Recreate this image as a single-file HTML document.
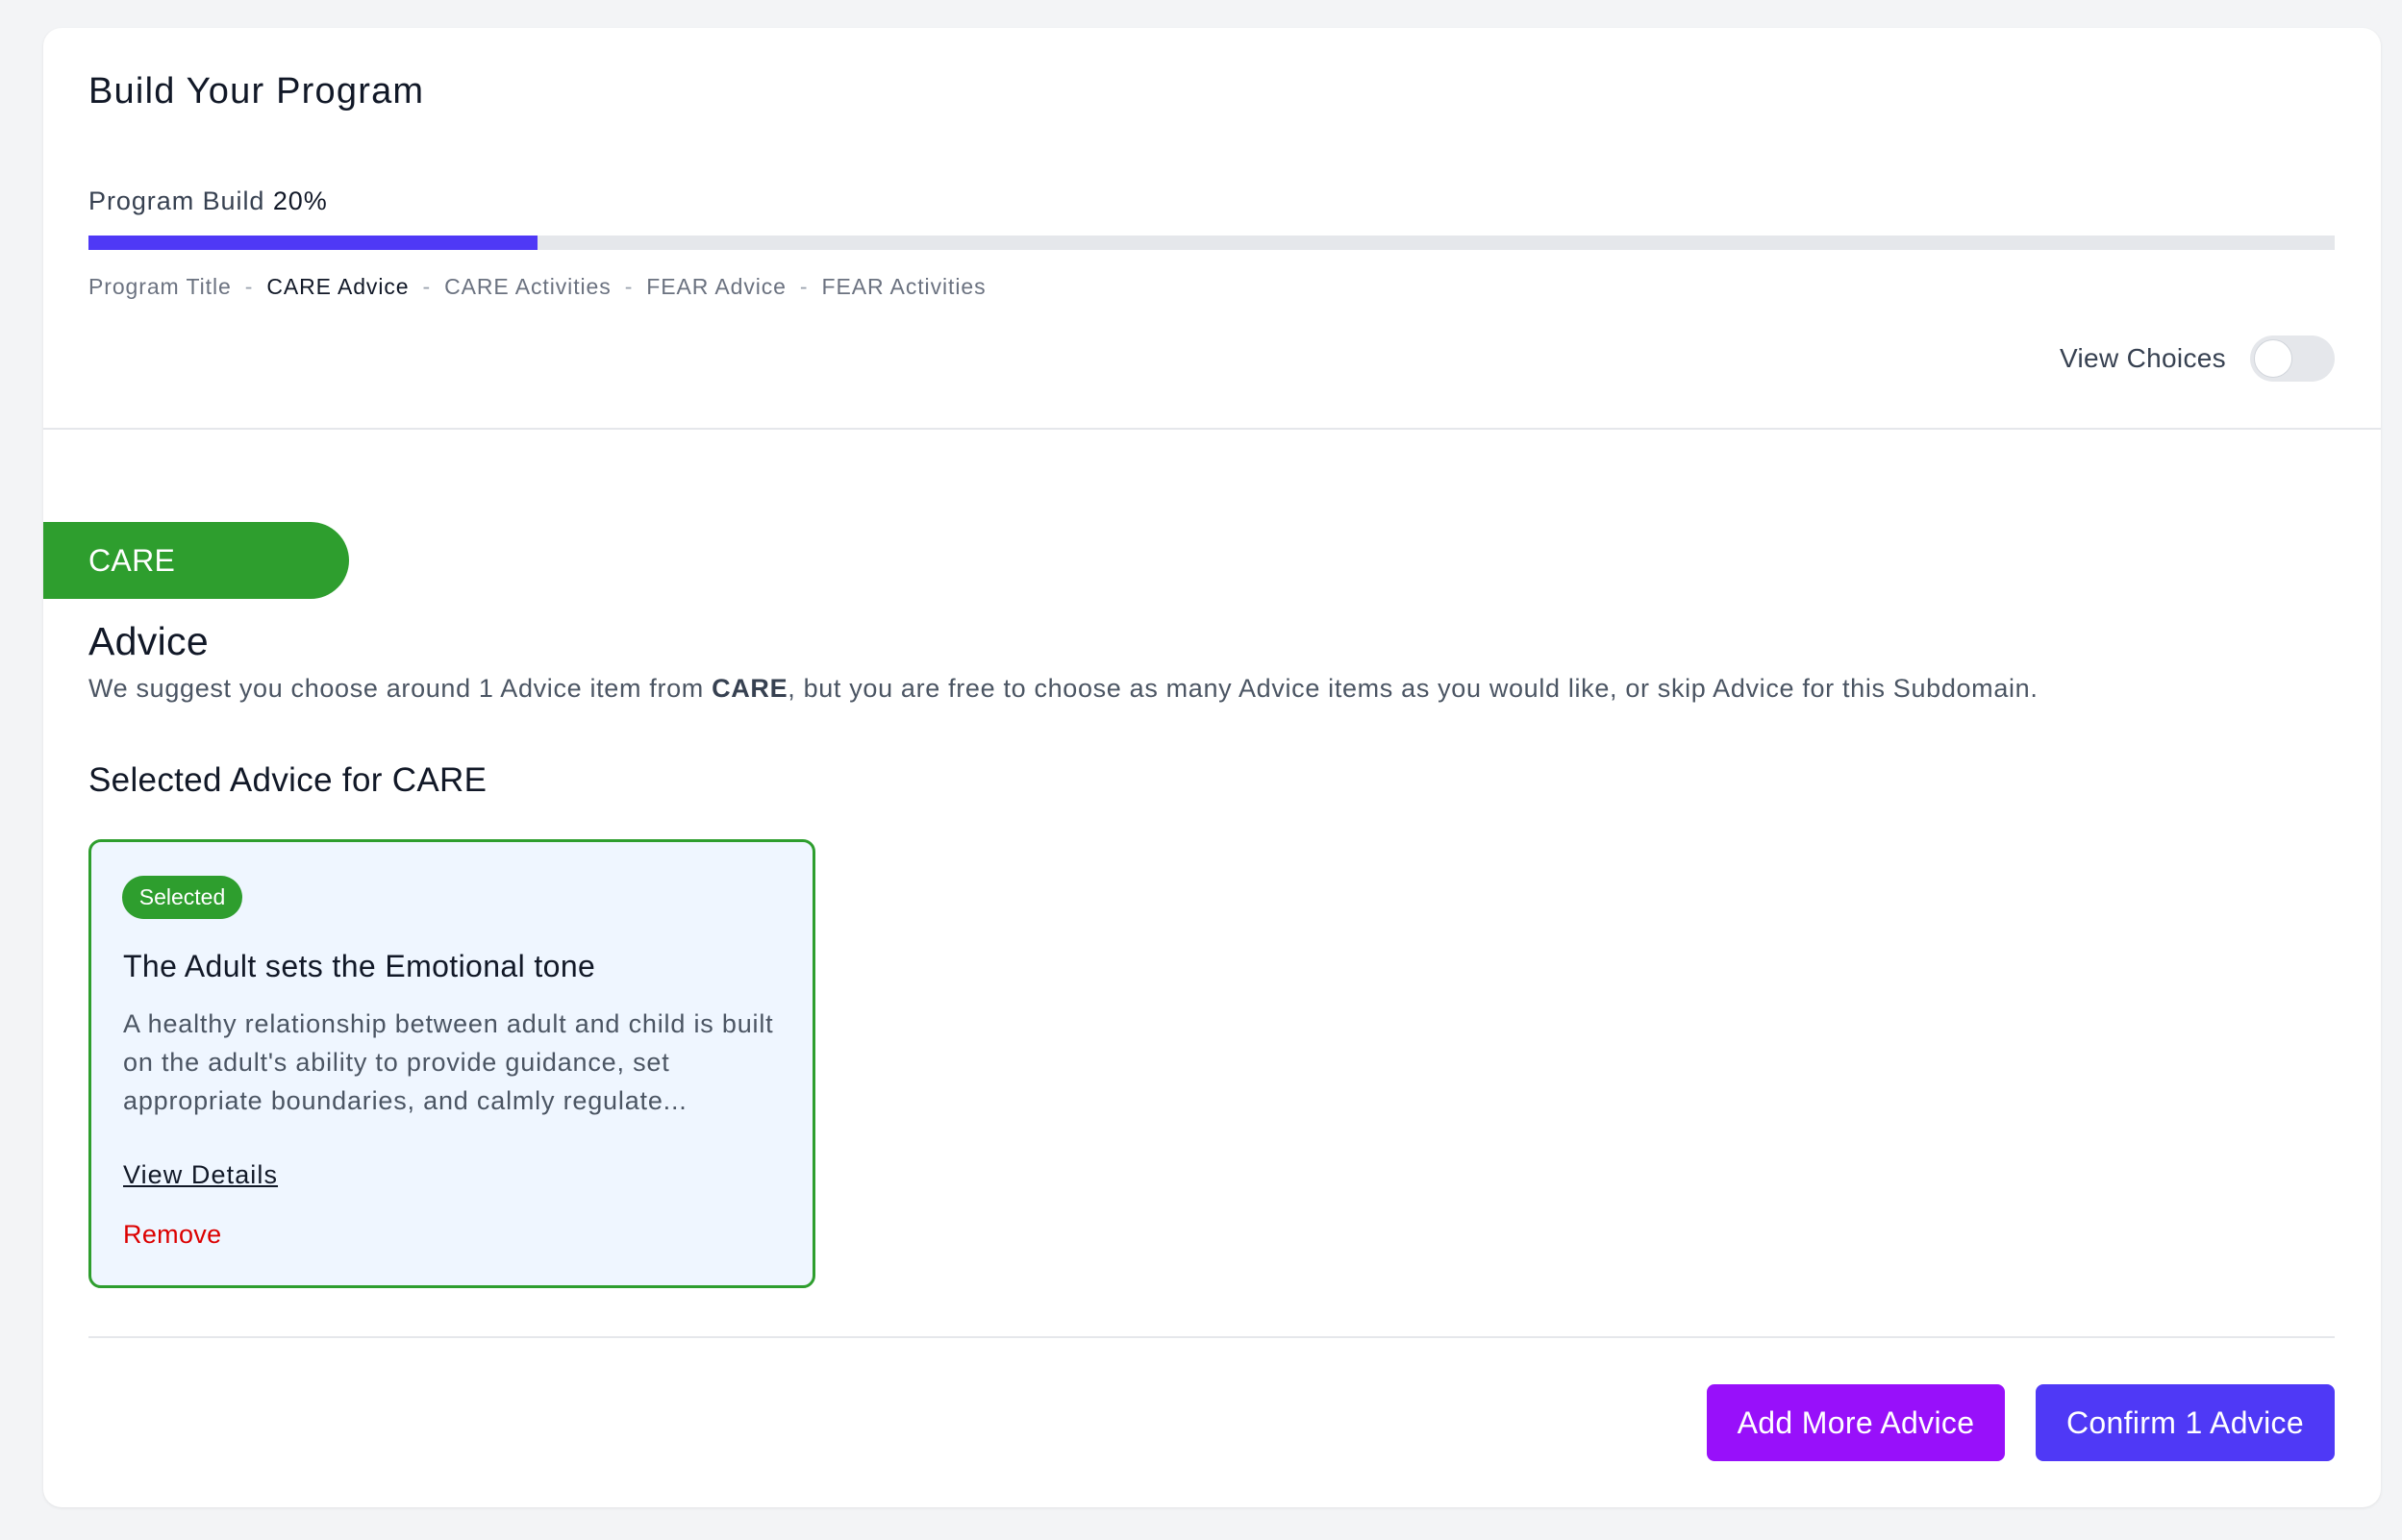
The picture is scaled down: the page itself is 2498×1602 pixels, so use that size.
<!DOCTYPE html>
<html><head><meta charset="utf-8"><style>
*{box-sizing:border-box;margin:0;padding:0}
body{width:2498px;height:1602px;background:#f3f4f6;font-family:"Liberation Sans",sans-serif;color:#111827;position:relative;overflow:hidden;letter-spacing:0.02em}
.card{position:absolute;left:45px;top:29px;width:2431px;height:1539px;background:#fff;border-radius:19px;box-shadow:0 1px 3px rgba(0,0,0,.08)}
.a{position:absolute;white-space:nowrap;line-height:1}
.s{color:#9ca3af;margin:0 14px}
</style></head><body>
<div class="card"></div>
<div class="a" style="left:92px;top:76px;font-size:38px;color:#111827;letter-spacing:0.032em">Build Your Program</div>
<div class="a" style="left:92px;top:196px;font-size:27px;color:#374151;letter-spacing:0.035em">Program Build <span style="color:#111827">20%</span></div>
<div style="position:absolute;left:92px;top:245px;width:2336px;height:15px;background:#e5e7eb"></div>
<div style="position:absolute;left:92px;top:245px;width:467px;height:15px;background:#4f39f6"></div>
<div class="a" style="left:92px;top:287px;font-size:23px;color:#6b7280;letter-spacing:0.04em">Program Title<span class="s">-</span><span style="color:#111827">CARE Advice</span><span class="s">-</span>CARE Activities<span class="s">-</span>FEAR Advice<span class="s">-</span>FEAR Activities</div>
<div class="a" style="right:183px;top:359px;font-size:28px;color:#374151">View Choices</div>
<div style="position:absolute;left:2340px;top:349px;width:88px;height:48px;border-radius:24px;background:#e5e7eb"></div>
<div style="position:absolute;left:2344px;top:353px;width:40px;height:40px;border-radius:50%;background:#fff;border:1px solid #d1d5db"></div>
<div style="position:absolute;left:45px;top:445px;width:2431px;height:2px;background:#e5e7eb"></div>
<div style="position:absolute;left:45px;top:543px;width:318px;height:80px;background:#2e9e2e;border-radius:0 40px 40px 0"></div>
<div class="a" style="left:92px;top:567px;font-size:32px;color:#fff">CARE</div>
<div class="a" style="left:92px;top:647px;font-size:41px;color:#111827">Advice</div>
<div class="a" style="left:92px;top:703px;font-size:27px;color:#4b5563;letter-spacing:0.0245em">We suggest you choose around 1 Advice item from <b style="color:#374151">CARE</b>, but you are free to choose as many Advice items as you would like, or skip Advice for this Subdomain.</div>
<div class="a" style="left:92px;top:794px;font-size:35px;color:#111827">Selected Advice for CARE</div>
<div style="position:absolute;left:92px;top:873px;width:756px;height:467px;background:#eff6ff;border:3px solid #2e9e2e;border-radius:13px"></div>
<div style="position:absolute;left:127px;top:911px;width:125px;height:45px;background:#2e9e2e;border-radius:23px;color:#fff;font-size:23px;line-height:45px;text-align:center;letter-spacing:0">Selected</div>
<div class="a" style="left:128px;top:989px;font-size:32px;color:#111827;letter-spacing:0.012em">The Adult sets the Emotional tone</div>
<div style="position:absolute;left:128px;top:1045px;width:695px;font-size:27px;line-height:40px;color:#4b5563;letter-spacing:0.03em">A healthy relationship between adult and child is built on the adult's ability to provide guidance, set appropriate boundaries, and calmly regulate...</div>
<div class="a" style="left:128px;top:1209px;font-size:27px;color:#111827;text-decoration:underline;letter-spacing:0.04em">View Details</div>
<div class="a" style="left:128px;top:1271px;font-size:27px;color:#dc0000">Remove</div>
<div style="position:absolute;left:92px;top:1390px;width:2336px;height:2px;background:#e5e7eb"></div>
<div style="position:absolute;left:1775px;top:1440px;width:310px;height:80px;background:#9810fa;border-radius:8px;color:#fff;font-size:32px;line-height:80px;text-align:center">Add More Advice</div>
<div style="position:absolute;left:2117px;top:1440px;width:311px;height:80px;background:#4f39f6;border-radius:8px;color:#fff;font-size:32px;line-height:80px;text-align:center">Confirm 1 Advice</div>
</body></html>
